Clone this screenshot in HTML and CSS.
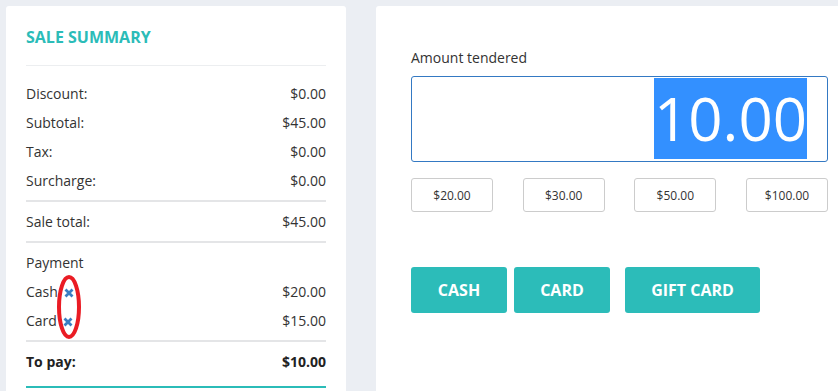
FILE: index.html
```html
<!DOCTYPE html>
<html lang="en">
<head>
    <meta charset="UTF-8">
    <meta name="viewport" content="width=device-width, initial-scale=1.0">
    <title>Sale summary</title>
    <link rel="stylesheet" href="styles.css">
</head>
<body>
    <div class="pos">
        <!-- Sale summary -->
        <section class="card summary">
            <h2 class="summary-title">SALE SUMMARY</h2>

            <div class="summary-group first">
                <div class="summary-row"><span>Discount:</span><span>$0.00</span></div>
                <div class="summary-row"><span>Subtotal:</span><span>$45.00</span></div>
                <div class="summary-row"><span>Tax:</span><span>$0.00</span></div>
                <div class="summary-row"><span>Surcharge:</span><span>$0.00</span></div>
            </div>

            <div class="summary-group">
                <div class="summary-row"><span>Sale total:</span><span>$45.00</span></div>
            </div>

            <div class="summary-group">
                <div class="summary-row"><span>Payment</span></div>
                <div class="summary-row">
                    <span>Cash<svg class="remove" viewBox="0 0 10 10"><path d="M1.5 1.5 L8.5 8.5 M8.5 1.5 L1.5 8.5"/></svg></span>
                    <span>$20.00</span>
                </div>
                <div class="summary-row">
                    <span>Card<svg class="remove" viewBox="0 0 10 10"><path d="M1.5 1.5 L8.5 8.5 M8.5 1.5 L1.5 8.5"/></svg></span>
                    <span>$15.00</span>
                </div>
            </div>

            <div class="summary-group total">
                <div class="summary-row"><span>To pay:</span><span>$10.00</span></div>
            </div>

            <!-- пометка красным -->
            <svg class="mark" viewBox="0 0 24 64"><ellipse cx="12" cy="32" rx="10" ry="30"/></svg>
        </section>

        <!-- Amount tendered -->
        <section class="card tender">
            <label class="tender-label">Amount tendered</label>
            <div class="tender-input"><span class="selected">10.00</span></div>

            <div class="presets">
                <button class="preset">$20.00</button>
                <button class="preset">$30.00</button>
                <button class="preset">$50.00</button>
                <button class="preset">$100.00</button>
            </div>

            <div class="methods">
                <button class="method">CASH</button>
                <button class="method">CARD</button>
                <button class="method gift">GIFT CARD</button>
            </div>
        </section>
    </div>
</body>
</html>
```

FILE: styles.css
```css
/* Общий стиль */
html, body {
    overflow: hidden;
}

body {
    font-family: 'Open Sans', 'Liberation Sans', sans-serif;
    margin: 0;
    padding: 6px;
    background: #ebeef3;
    color: #333;
}

.pos {
    display: flex;
    gap: 30px;
}

.card {
    background: #fff;
    border-radius: 3px;
    min-height: 420px;
    box-sizing: border-box;
    flex-shrink: 0;
}

/* Итоги продажи */
.summary {
    position: relative;
    width: 340px;
    padding: 20px 20px 0;
}

.summary-title {
    margin: 0;
    font-size: 16px;
    line-height: 22px;
    font-weight: 700;
    color: #2bbcb8;
    padding-bottom: 17px;
    border-bottom: 1px solid #eceef0;
}

.summary-group {
    padding: 5px 0;
    border-top: 2px solid #e4e5e7;
}

.summary-group.first {
    border-top: none;
    margin-top: 8px;
}

.summary-group.total {
    padding-bottom: 10px;
    border-bottom: 2px solid #2bbcb8;
}

.summary-row {
    display: flex;
    justify-content: space-between;
    font-size: 14px;
    line-height: 19px;
    padding: 5px 0;
}

.total .summary-row {
    font-weight: 700;
    color: #222;
}

.remove {
    width: 10px;
    height: 10px;
    margin-left: 6px;
    vertical-align: -1px;
    fill: none;
    stroke: #3a7ec2;
    stroke-width: 2.8;
}

.mark {
    position: absolute;
    left: 51px;
    top: 269px;
    width: 24px;
    height: 64px;
    fill: none;
    stroke: #ea1c24;
    stroke-width: 4;
}

/* Сумма */
.tender {
    width: 487px;
    padding: 42px 35px 0;
}

.tender-label {
    display: block;
    font-size: 14px;
    line-height: 19px;
    margin-bottom: 9px;
}

.tender-input {
    height: 86px;
    box-sizing: border-box;
    border: 1px solid #3479c3;
    border-radius: 3px;
    padding: 1px 20px 0;
    text-align: right;
    font-size: 60px;
    line-height: 81px;
}

.selected {
    display: inline-block;
    background: #3390ff;
    color: #fff;
}

.presets {
    display: flex;
    justify-content: space-between;
    margin-top: 16px;
}

.preset {
    width: 82px;
    height: 34px;
    background: #fff;
    border: 1px solid #ccc;
    border-radius: 3px;
    font-family: inherit;
    font-size: 12px;
    color: #333;
    padding: 0;
}

.methods {
    display: flex;
    gap: 7px;
    margin-top: 55px;
}

.method {
    height: 46px;
    width: 96px;
    padding: 0;
    background: #2cbcb9;
    color: #fff;
    border: none;
    border-radius: 3px;
    font-family: inherit;
    font-size: 16px;
    font-weight: 700;
}

.method.gift {
    width: 135px;
    margin-left: 8px;
}
```
